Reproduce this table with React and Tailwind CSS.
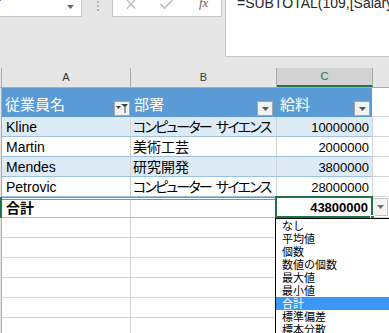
import React from "react";

const Arrow = ({ c = "#595959" }) => (
  <svg width="7" height="4" viewBox="0 0 7 4"><path d="M0 0h7L3.5 4z" fill={c} /></svg>
);

const FilterBtn = ({ filter }) => (
  <div className="w-[16px] h-[15px] bg-[#f2f2f2] border border-[#a6a6a6] flex items-center justify-center gap-[1px]">
    {filter ? (
      <svg width="12" height="9" viewBox="0 0 12 9">
        <path d="M0 2h5L2.5 5z" fill="#444" />
        <path d="M5 0h7L9.5 3v6H8.5V3z" fill="#444" />
      </svg>
    ) : (
      <Arrow />
    )}
  </div>
);

const dataRows = [
  { a: "Kline", b: ["コンピューター", "サイエンス"], c: "10000000", band: true },
  { a: "Martin", b: ["美術工芸"], c: "2000000", band: false },
  { a: "Mendes", b: ["研究開発"], c: "3800000", band: true },
  { a: "Petrovic", b: ["コンピューター", "サイエンス"], c: "28000000", band: false },
];

const menu = ["なし", "平均値", "個数", "数値の個数", "最大値", "最小値", "合計", "標準偏差", "標本分散"];

export default function App() {
  return (
    <div className="w-[389px] h-[333px] overflow-hidden relative bg-white font-['Liberation_Sans','Noto_Sans_CJK_JP',sans-serif] text-[#000]">
      {/* top toolbar */}
      <div className="h-[68px] bg-[#e6e6e6] flex items-start">
        <div className="w-[82px] h-[17px] bg-white border-r border-b border-[#c6c6c6] flex items-start overflow-hidden">
          <span className="-ml-[6px] -mt-[8px] text-[15px] leading-[20px] italic text-[#333]">7</span>
          <div className="ml-auto mr-[7px] mt-[5px]"><Arrow c="#6a6a6a" /></div>
        </div>
        <div className="ml-[15px] flex flex-col gap-[2px] pt-[1px]">
          <div className="w-[2px] h-[2px] bg-[#b4b4b4]" />
          <div className="w-[2px] h-[2px] bg-[#b4b4b4]" />
          <div className="w-[2px] h-[2px] bg-[#b4b4b4]" />
        </div>
        <div className="ml-[13px] w-[110px] h-[17px] bg-white border-x border-b border-[#c6c6c6] flex items-start overflow-hidden">
          <svg className="ml-[13px] mt-[0px]" width="10" height="9" viewBox="0 0 10 9">
            <path d="M1 0L9 8.5M9 0L1 8.5" stroke="#bcbcbc" strokeWidth="1.3" />
          </svg>
          <svg className="ml-[24px] mt-[0px]" width="13" height="9" viewBox="0 0 13 9">
            <path d="M0.5 4L4.5 8.2L12.5 0" stroke="#c4c4c4" strokeWidth="1.7" fill="none" />
          </svg>
          <span className="ml-[26px] -mt-[5px] text-[13px] leading-[16px] italic font-['Liberation_Serif',serif] text-[#666]">fx</span>
        </div>
        <div className="ml-[3px] flex-1 h-[57px] bg-white border-l border-b border-[#c6c6c6] overflow-hidden">
          <div className="ml-[11px] -mt-[5px] text-[14px] leading-[16px] text-[#262626] whitespace-nowrap">=SUBTOTAL(109,[Salary])</div>
        </div>
      </div>

      {/* column headers */}
      <div className="flex h-[20px] bg-[#e6e6e6] border-b border-[#ababab] text-[11px] text-[#333]">
        <div className="w-[2px] border-r border-[#ababab]" />
        <div className="w-[129px] border-r border-[#ababab] flex items-center justify-center">A</div>
        <div className="w-[146px] border-r border-[#ababab] flex items-center justify-center">B</div>
        <div className="w-[96px] bg-[#d2d2d2] border-r border-[#ababab] border-b-2 border-b-[#217346] flex items-center justify-center text-[#217346]">C</div>
        <div className="flex-1" />
      </div>

      {/* table header */}
      <div className="flex h-[29px] text-[15px] text-white">
        <div className="w-[2px] border-r border-[#ababab] bg-[#e6e6e6]" />
        <div className="w-[370px] bg-[#5b9bd5] flex items-end pb-[1px]">
          <div className="w-[129px] flex items-end justify-between pl-[3px] pr-[1px]">
            <span className="leading-[20px] pb-[1px]">従業員名</span>
            <FilterBtn filter />
          </div>
          <div className="w-[146px] flex items-end justify-between pl-[3px] pr-[4px]">
            <span className="leading-[20px] pb-[1px]">部署</span>
            <FilterBtn />
          </div>
          <div className="w-[95px] flex items-end justify-between pl-[3px] pr-[2px]">
            <span className="leading-[20px] pb-[1px]">給料</span>
            <FilterBtn />
          </div>
        </div>
        <div className="flex-1 border-b border-[#d4d4d4]" />
      </div>

      {/* data rows */}
      {dataRows.map((r) => (
        <div key={r.a} className="flex h-[20px] text-[14px]">
          <div className="w-[2px] border-r border-[#ababab] bg-[#e6e6e6]" />
          <div className={`w-[370px] flex border-b border-[#9bc2e6] ${r.band ? "bg-[#ddebf7]" : "bg-white"}`}>
            <div className="w-[129px] border-r border-[#d4d4d4] flex items-end pl-[4px] leading-[17px]">{r.a}</div>
            <div className="w-[146px] border-r border-[#d4d4d4] flex items-end pl-[2px] leading-[17px] whitespace-nowrap [font-feature-settings:'palt']">
              {r.b.length > 1 ? (
                <>
                  <span className="tracking-[-1.8px]">{r.b[0]}</span>
                  <span className="ml-[5px] tracking-[-1.8px]">{r.b[1]}</span>
                </>
              ) : (
                <span>{r.b[0]}</span>
              )}
            </div>
            <div className="w-[95px] flex items-end justify-end pr-[3px] text-[13px] leading-[17px]">{r.c}</div>
          </div>
          <div className="flex-1 border-l border-b border-[#d4d4d4]" />
        </div>
      ))}

      {/* total row */}
      <div className="flex h-[21px] text-[14px] font-bold">
        <div className="w-[2px] bg-[#217346]" />
        <div className="w-[370px] flex border-t-[3px] border-double border-t-[#5b9bd5] border-b border-b-[#9bc2e6] bg-white">
          <div className="w-[129px] border-r border-[#d4d4d4] flex items-end pl-[4px] leading-[17px]">合計</div>
          <div className="w-[146px] border-r border-[#d4d4d4]" />
          <div className="w-[95px]" />
        </div>
        <div className="flex-1 border-b border-[#d4d4d4] flex items-start pt-[1px]">
          <div className="w-[16px] h-[18px] bg-[#f4f4f4] border border-[#c6c6c6] flex items-center justify-center">
            <Arrow c="#707070" />
          </div>
        </div>
      </div>

      {/* empty rows */}
      {[0, 1, 2, 3, 4, 5].map((i) => (
        <div key={i} className="flex h-[20px]">
          <div className="w-[2px] border-r border-[#ababab] bg-[#e6e6e6]" />
          <div className="w-[129px] border-r border-b border-[#d4d4d4]" />
          <div className="w-[146px] border-r border-b border-[#d4d4d4]" />
          <div className="w-[96px] border-r border-b border-[#d4d4d4]" />
          <div className="flex-1 border-b border-[#d4d4d4]" />
        </div>
      ))}

      {/* selected total cell */}
      <div className="absolute left-[275px] top-[196px] w-[98px] h-[22px] border-2 border-[#217346] flex items-center justify-end pr-[3px] text-[13px] font-bold leading-[17px] bg-white">
        43800000
        <div className="absolute -right-[4px] -bottom-[4px] w-[5px] h-[5px] bg-[#217346] border border-white" />
      </div>

      {/* dropdown list */}
      <div className="absolute left-[275px] top-[218px] w-[130px] bg-white border border-black text-[11px] font-['Noto_Sans_CJK_JP',sans-serif]">
        {menu.map((m) => (
          <div key={m} className={`h-[13px] leading-[13px] pl-[6px] whitespace-nowrap overflow-hidden ${m === "合計" ? "bg-[#3c96f4] text-white" : "text-black"}`}>{m}</div>
        ))}
      </div>
    </div>
  );
}
